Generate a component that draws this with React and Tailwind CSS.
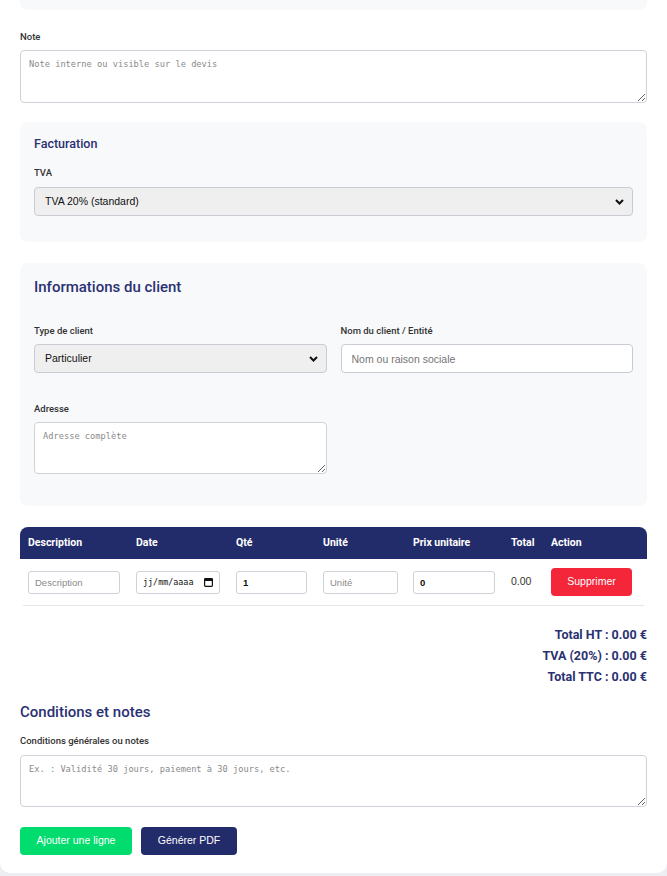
import React from "react";

function Chevron() {
  return (
    <svg
      width="9"
      height="6"
      viewBox="0 0 9 6"
      className="pointer-events-none absolute right-[9px] top-1/2 -translate-y-1/2"
    >
      <path d="M1 1 L4.5 4.5 L8 1" fill="none" stroke="#111" strokeWidth="2" />
    </svg>
  );
}

function CalendarIcon() {
  return (
    <svg width="9" height="9" viewBox="0 0 9 9" className="shrink-0">
      <rect x="0.6" y="0.6" width="7.8" height="7.8" rx="0.8" fill="none" stroke="#111" strokeWidth="1.2" />
      <rect x="0.6" y="0.6" width="7.8" height="2.4" fill="#111" />
    </svg>
  );
}

const labelCls =
  "block text-[9.5px] leading-[12px] font-medium text-[#333] font-['Roboto',sans-serif]";
const textareaCls =
  "block w-full rounded-[4px] border border-[#cfd2d8] bg-white px-2 py-2 text-[8.7px] leading-[11px] font-['DejaVu_Sans_Mono',monospace] text-[#111] placeholder:text-[#8a8a8a] outline-none";
const selectCls =
  "block w-full h-[29px] appearance-none rounded-[4px] border border-[#c9ccd2] bg-[#efefef] pl-[10px] pr-6 text-[10.5px] text-[#111] font-['Liberation_Sans',Arial,sans-serif] outline-none";
const cellInput =
  "block h-[23px] rounded-[3px] border border-[#cfd2d8] bg-white px-[6px] text-[9.5px] text-[#111] font-['Liberation_Sans',Arial,sans-serif] placeholder:text-[#8a8a8a] outline-none";

export default function App() {
  return (
    <div className="min-h-[876px] bg-[#eceef1] font-['Roboto',sans-serif]">
      <div className="rounded-b-[10px] bg-white px-5 pb-[18px]">
        <div className="h-[10px] rounded-b-lg bg-[#f8f9fb]" />

        <label className={labelCls + " mt-[21px]"}>Note</label>
        <textarea
          className={textareaCls + " mt-[7px] h-[53px]"}
          placeholder="Note interne ou visible sur le devis"
        />

        <section className="mt-[19px] rounded-lg bg-[#f8f9fb] px-[14px] pt-[14px] pb-[26px]">
          <h3 className="text-[12.5px] leading-[16px] font-medium text-[#2a3172]">Facturation</h3>
          <label className={labelCls + " mt-[15px]"}>TVA</label>
          <div className="relative mt-2">
            <select className={selectCls} defaultValue="20">
              <option value="20">TVA 20% (standard)</option>
            </select>
            <Chevron />
          </div>
        </section>

        <section className="mt-[21px] rounded-lg bg-[#f8f9fb] px-[14px] pt-[14px] pb-[32px]">
          <h3 className="text-[15px] leading-[20px] font-medium text-[#2a3172]">Informations du client</h3>
          <div className="mt-[28px] grid grid-cols-2 gap-x-[14px]">
            <div>
              <label className={labelCls}>Type de client</label>
              <div className="relative mt-[7px]">
                <select className={selectCls} defaultValue="p">
                  <option value="p">Particulier</option>
                </select>
                <Chevron />
              </div>
            </div>
            <div>
              <label className={labelCls}>Nom du client / Entité</label>
              <input
                className="mt-[7px] block h-[29px] w-full rounded-[4px] border border-[#c9ccd2] bg-white pl-[10px] text-[10.5px] text-[#111] font-['Liberation_Sans',Arial,sans-serif] placeholder:text-[#757575] outline-none"
                placeholder="Nom ou raison sociale"
              />
            </div>
            <div className="mt-[30px]">
              <label className={labelCls}>Adresse</label>
              <textarea className={textareaCls + " mt-[7px] h-[52px]"} placeholder="Adresse complète" />
            </div>
          </div>
        </section>

        <div className="mt-[21px]">
          <div className="grid h-[32px] grid-cols-[108px_100px_87px_90px_98px_40px_103px] items-center rounded-t-lg bg-[#232c6b] text-[10.5px] font-bold text-white">
            <div className="pl-2">Description</div>
            <div className="pl-2">Date</div>
            <div className="pl-2">Qté</div>
            <div className="pl-2">Unité</div>
            <div className="pl-2">Prix unitaire</div>
            <div className="pl-2">Total</div>
            <div className="pl-2">Action</div>
          </div>
          <div className="mx-[3px] grid h-[47px] grid-cols-[105px_100px_87px_90px_98px_40px_100px] items-center border-b border-[#e3e5e8]">
            <div className="pl-[5px]">
              <input className={cellInput + " w-[92px]"} placeholder="Description" />
            </div>
            <div className="pl-2">
              <div className="flex h-[23px] w-[84px] items-center justify-between rounded-[3px] border border-[#cfd2d8] bg-white pl-[6px] pr-[6px]">
                <span className="text-[8.4px] font-['DejaVu_Sans_Mono',monospace] text-[#111]">jj/mm/aaaa</span>
                <CalendarIcon />
              </div>
            </div>
            <div className="pl-2">
              <input
                className={cellInput + " w-[71px] font-['DejaVu_Sans_Mono',monospace] font-bold text-[8.5px]"}
                defaultValue="1"
              />
            </div>
            <div className="pl-2">
              <input className={cellInput + " w-[75px]"} placeholder="Unité" />
            </div>
            <div className="pl-2">
              <input
                className={cellInput + " w-[82px] font-['DejaVu_Sans_Mono',monospace] font-bold text-[8.5px]"}
                defaultValue="0"
              />
            </div>
            <div className="pl-2 text-[10.5px] text-[#333] font-['Liberation_Sans',Arial,sans-serif]">0.00</div>
            <div className="pl-2">
              <button className="h-[28px] w-[81px] rounded-[4px] bg-[#f3263a] text-[10.5px] text-white font-['Liberation_Sans',Arial,sans-serif]">
                Supprimer
              </button>
            </div>
          </div>
        </div>

        <div className="mt-[18px] text-right text-[12.5px] leading-[21px] font-bold text-[#2a3172]">
          <div>Total HT : 0.00 €</div>
          <div>TVA (20%) : 0.00 €</div>
          <div>Total TTC : 0.00 €</div>
        </div>

        <h3 className="mt-[15px] text-[15px] leading-[20px] font-medium text-[#2a3172]">Conditions et notes</h3>
        <label className={labelCls + " mt-[13px]"}>Conditions générales ou notes</label>
        <textarea
          className={textareaCls + " mt-2 h-[52px]"}
          placeholder="Ex. : Validité 30 jours, paiement à 30 jours, etc."
        />

        <div className="mt-[20px] flex gap-[9px]">
          <button className="h-[28px] w-[112px] rounded-[4px] bg-[#00dc6e] text-[10.5px] text-white font-['Liberation_Sans',Arial,sans-serif]">
            Ajouter une ligne
          </button>
          <button className="h-[28px] w-[96px] rounded-[4px] bg-[#232c6b] text-[10.5px] text-white font-['Liberation_Sans',Arial,sans-serif]">
            Générer PDF
          </button>
        </div>
      </div>
    </div>
  );
}
